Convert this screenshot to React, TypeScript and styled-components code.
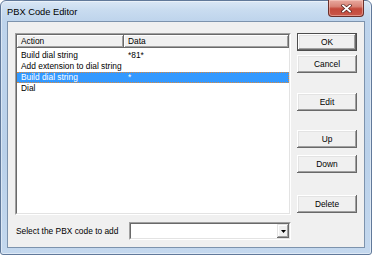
import React from 'react';
import styled, { createGlobalStyle } from 'styled-components';

const GlobalStyle = createGlobalStyle`
  html, body {
    margin: 0;
    padding: 0;
    background: #ffffff;
  }
  body {
    font-family: 'Liberation Sans', Arial, sans-serif;
    font-size: 8.4px;
    color: #000;
  }
`;

const Window = styled.div`
  width: 372px;
  height: 255px;
  box-sizing: border-box;
  display: flex;
  flex-direction: column;
  padding: 0 6px 6px;
  border: 1px solid #61799a;
  border-radius: 6px 6px 3px 3px;
  background: linear-gradient(to bottom, #dae7f5 0px, #c9dcf0 9px, #bed4ec 20px, #bad1ea 60%, #c4d8ee 100%);
  box-shadow: inset 0 0 0 1px rgba(255, 255, 255, 0.45);
`;

const TitleBar = styled.div`
  height: 20px;
  display: flex;
  align-items: flex-start;
  justify-content: space-between;
`;

const Title = styled.span`
  font-size: 9.3px;
  line-height: 23px;
  color: #000;
`;

const CloseButton = styled.div`
  width: 36px;
  height: 17px;
  margin-top: -1px;
  margin-right: 1px;
  box-sizing: border-box;
  border: 1px solid #6b2f2a;
  border-top: none;
  border-radius: 0 0 4px 4px;
  background: linear-gradient(to bottom, #e9a99f 0%, #d98477 40%, #c4493b 55%, #c8574a 100%);
  box-shadow: inset 0 0 0 1px rgba(255, 220, 210, 0.45);
  display: flex;
  align-items: center;
  justify-content: center;
`;

const Client = styled.div`
  flex: 1;
  display: flex;
  flex-direction: column;
  background: #f0f0f0;
  border: 1px solid #7d93ad;
`;

const MainRow = styled.div`
  display: flex;
  padding: 11px 7px 0 7px;
`;

const ListOuter = styled.div`
  width: 276px;
  height: 182px;
  box-sizing: border-box;
  border: 1px solid;
  border-color: #a0a0a0 #ffffff #ffffff #a0a0a0;
`;

const ListInner = styled.div`
  height: 100%;
  box-sizing: border-box;
  border: 1px solid;
  border-color: #696969 #e3e3e3 #e3e3e3 #696969;
  background: #ffffff;
  overflow: hidden;
`;

const Header = styled.div`
  display: grid;
  grid-template-columns: 107px 1fr;
  height: 13px;
`;

const HeaderCell = styled.div`
  background: #f0f0f0;
  padding-left: 4px;
  line-height: 12px;
  box-shadow: inset -1px -1px #696969, inset 1px 1px #ffffff, inset -2px -2px #a0a0a0;
`;

const Rows = styled.div`
  padding-top: 2px;
`;

const Row = styled.div<{ $selected?: boolean }>`
  display: grid;
  grid-template-columns: 107px 1fr;
  height: 11px;
  line-height: 9px;
  box-sizing: border-box;
  border: 1px ${(p) => (p.$selected ? 'dotted #d8893f' : 'solid transparent')};
  border-left-width: 0;
  background: ${(p) => (p.$selected ? '#3399ff' : 'transparent')};
  color: ${(p) => (p.$selected ? '#ffffff' : '#000000')};
`;

const Cell = styled.div`
  padding-left: 4px;
  white-space: nowrap;
`;

const ButtonColumn = styled.div`
  display: flex;
  flex-direction: column;
  margin-left: 6px;
`;

const Button = styled.div<{ $top: number; $default?: boolean }>`
  width: 60px;
  height: 18px;
  margin-top: ${(p) => p.$top}px;
  box-sizing: border-box;
  background: #f0f0f0;
  display: flex;
  align-items: center;
  justify-content: center;
  border: ${(p) => (p.$default ? '1px solid #4d4d4d' : 'none')};
  box-shadow: inset -1px -1px #696969, inset 1px 1px #ffffff, inset -2px -2px #a0a0a0, inset 2px 2px #e3e3e3;
`;

const BottomRow = styled.div`
  display: flex;
  align-items: center;
  padding: 7px 0 0 8px;
`;

const Label = styled.span`
  width: 113px;
  flex-shrink: 0;
`;

const ComboOuter = styled.div`
  width: 162px;
  height: 18px;
  box-sizing: border-box;
  border: 1px solid;
  border-color: #a0a0a0 #ffffff #ffffff #a0a0a0;
`;

const ComboInner = styled.div`
  height: 100%;
  box-sizing: border-box;
  border: 1px solid;
  border-color: #696969 #e3e3e3 #e3e3e3 #696969;
  background: #ffffff;
  display: flex;
  justify-content: flex-end;
`;

const DropButton = styled.div`
  width: 12px;
  height: 100%;
  box-sizing: border-box;
  background: #f0f0f0;
  display: flex;
  align-items: center;
  justify-content: center;
  box-shadow: inset -1px -1px #696969, inset 1px 1px #e3e3e3, inset -2px -2px #a0a0a0, inset 2px 2px #ffffff;
`;

const rows = [
  { action: 'Build dial string', data: '*81*' },
  { action: 'Add extension to dial string', data: '' },
  { action: 'Build dial string', data: '*', selected: true },
  { action: 'Dial', data: '' },
];

const buttons = [
  { label: 'OK', top: 0, isDefault: true },
  { label: 'Cancel', top: 4 },
  { label: 'Edit', top: 20 },
  { label: 'Up', top: 19 },
  { label: 'Down', top: 7 },
  { label: 'Delete', top: 22 },
];

const App = () => {
  return (
    <>
      <GlobalStyle />
      <Window>
        <TitleBar>
          <Title>PBX Code Editor</Title>
          <CloseButton>
            <svg width="11" height="9" viewBox="0 0 11 9">
              <path d="M2 1.5 L9 7.5 M9 1.5 L2 7.5" stroke="#5a2520" strokeWidth="3.2" strokeLinecap="square" />
              <path d="M2 1.5 L9 7.5 M9 1.5 L2 7.5" stroke="#ffffff" strokeWidth="1.8" strokeLinecap="square" />
            </svg>
          </CloseButton>
        </TitleBar>
        <Client>
          <MainRow>
            <ListOuter>
              <ListInner>
                <Header>
                  <HeaderCell>Action</HeaderCell>
                  <HeaderCell>Data</HeaderCell>
                </Header>
                <Rows>
                  {rows.map((r, i) => (
                    <Row key={i} $selected={r.selected}>
                      <Cell>{r.action}</Cell>
                      <Cell>{r.data}</Cell>
                    </Row>
                  ))}
                </Rows>
              </ListInner>
            </ListOuter>
            <ButtonColumn>
              {buttons.map((b) => (
                <Button key={b.label} $top={b.top} $default={b.isDefault}>
                  {b.label}
                </Button>
              ))}
            </ButtonColumn>
          </MainRow>
          <BottomRow>
            <Label>Select the PBX code to add</Label>
            <ComboOuter>
              <ComboInner>
                <DropButton>
                  <svg width="5" height="3" viewBox="0 0 5 3">
                    <path d="M0 0 H5 L2.5 3 Z" fill="#000" />
                  </svg>
                </DropButton>
              </ComboInner>
            </ComboOuter>
          </BottomRow>
        </Client>
      </Window>
    </>
  );
};

export default App;
